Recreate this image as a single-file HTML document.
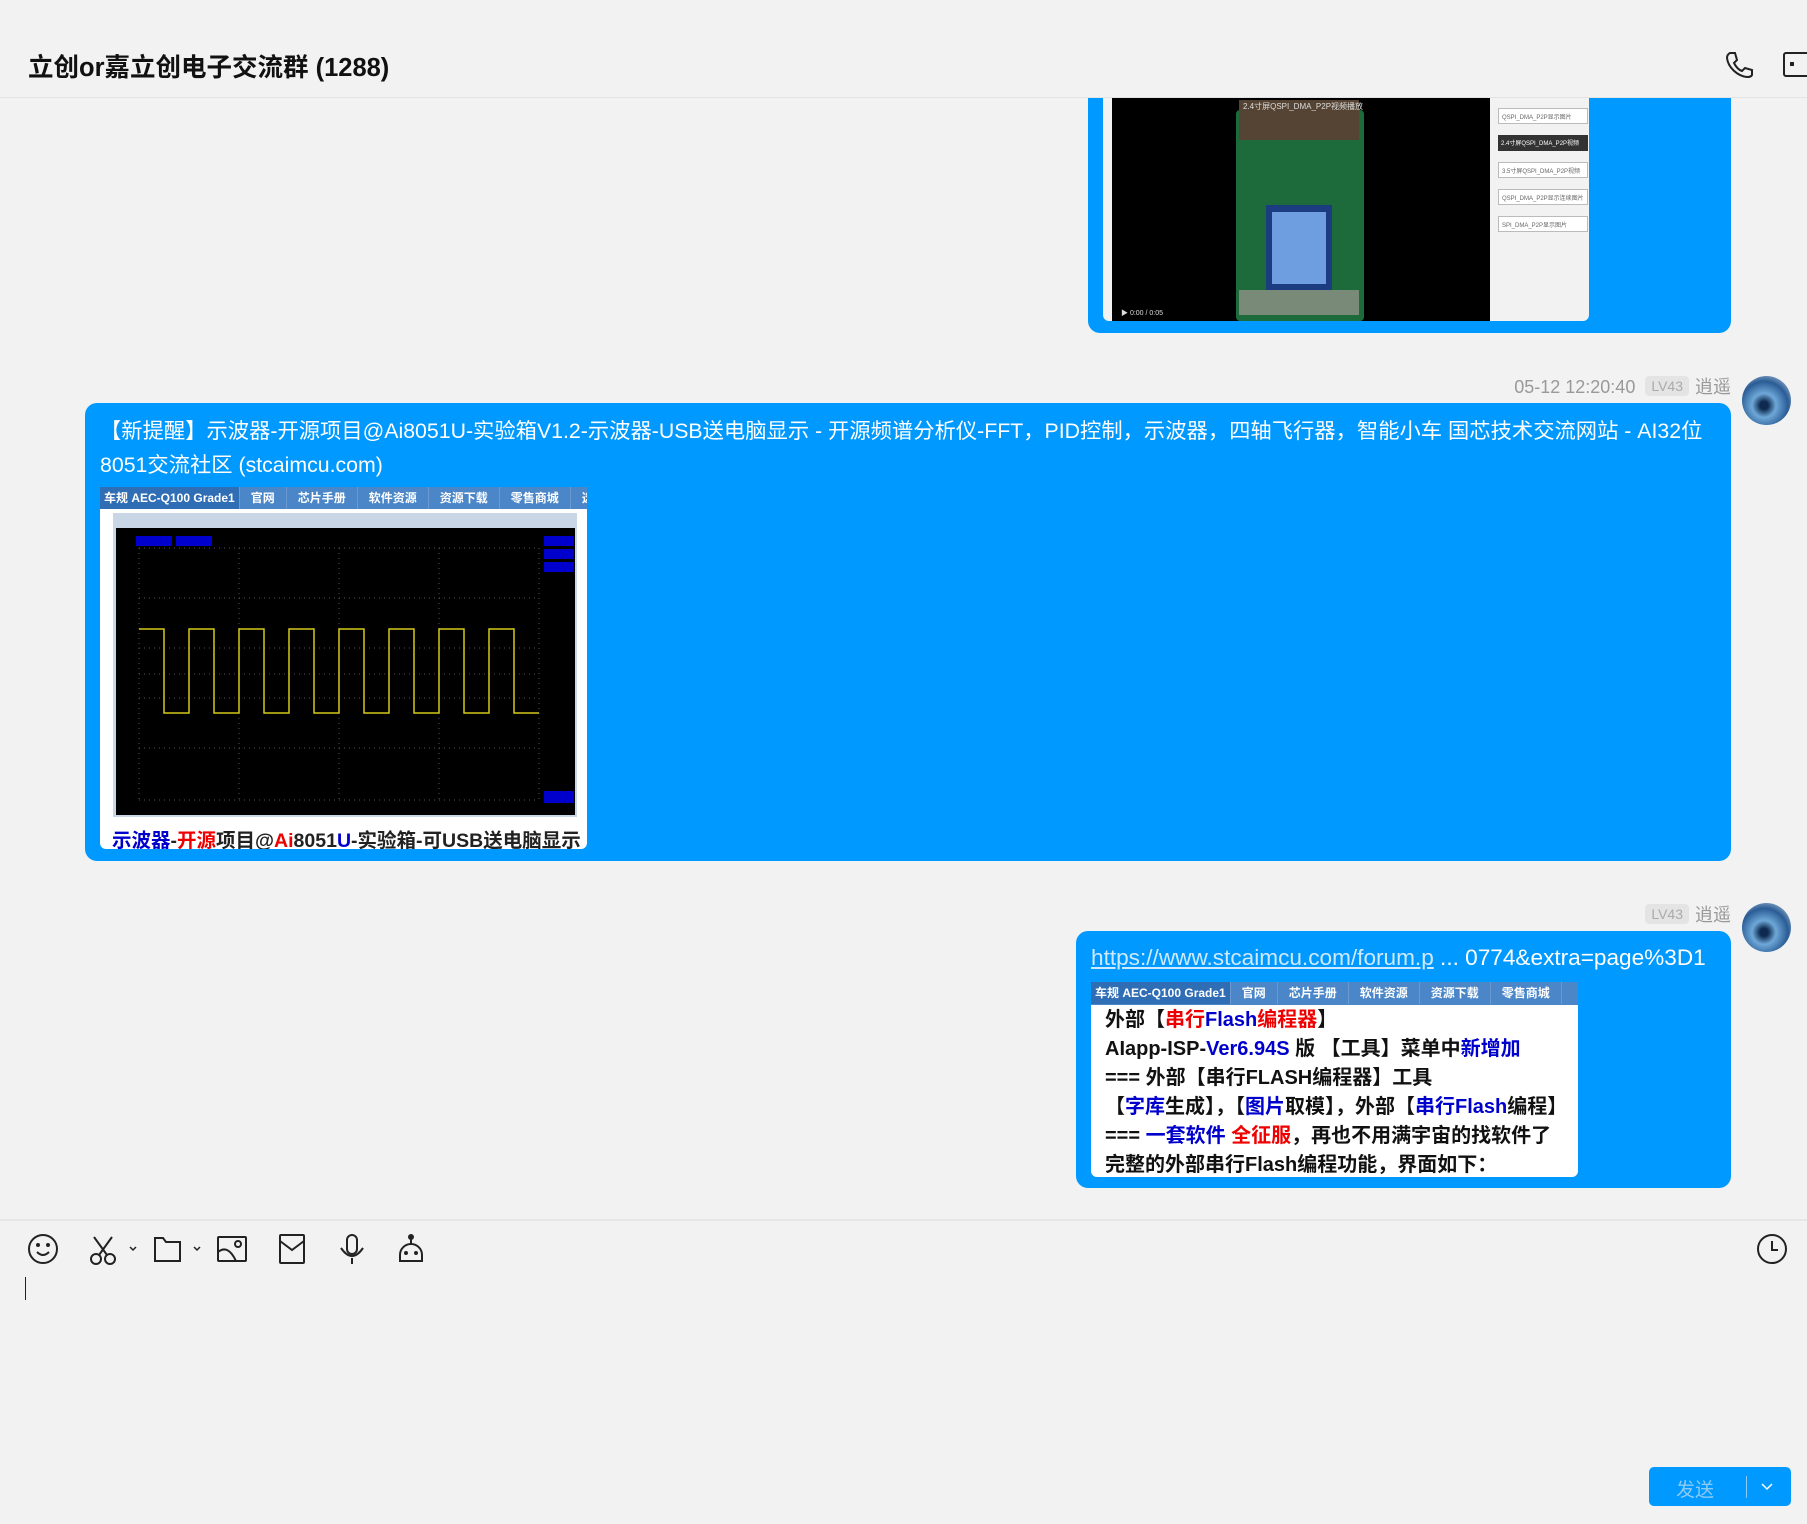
<!DOCTYPE html>
<html><head><meta charset="utf-8"><style>
*{margin:0;padding:0;box-sizing:border-box}
body{width:1807px;height:1524px;background:#f2f2f2;font-family:"Liberation Sans","Noto Sans CJK SC",sans-serif;position:relative;overflow:hidden}
.a{position:absolute}
.bub{position:absolute;background:#0099ff;border-radius:12px}
.nav{position:absolute;left:0;top:0;right:0;height:22px;background:#4a86c8;color:#fff;font-size:12px;font-weight:bold;white-space:nowrap;overflow:hidden}
.nav span{display:inline-block;padding:0 11px;line-height:22px;border-right:1px solid #6b9ad2}
.nav span:first-child{background:#2f6db5;padding:0 4px}
.meta{position:absolute;font-size:18px;color:#999;white-space:nowrap}
.lv{display:inline-block;background:#e4e4e4;color:#aaa;border-radius:4px;font-size:14px;padding:2px 6px;margin:0 6px 0 10px;vertical-align:2px}
.av{position:absolute;width:49px;height:49px;border-radius:50%;background:radial-gradient(circle at 45% 60%,#0e2a50 0 10%,#6ea8d8 30%,#2a5c95 60%,#dbe8f3 100%)}
.fl{font-weight:bold;font-size:20px;line-height:29px;color:#111;white-space:nowrap}
</style></head><body>

<div class="a" style="left:0;top:0;width:1807px;height:98px;background:#f2f2f2;border-bottom:1px solid #e3e3e3;z-index:5"></div>
<div class="a" style="left:28px;top:47px;font-size:25.5px;font-weight:bold;color:#111;z-index:6">立创or嘉立创电子交流群 (1288)</div>
<svg class="a" style="left:1724px;top:50px;z-index:6" width="30" height="30" viewBox="0 0 30 30"><path d="M6 3l5 0 2 7-3 3c2 4 5 7 8 8l3-3 7 2 0 5c-1 2-3 2-5 2C13 26 4 17 3 8c0-2 1-4 3-5z" fill="none" stroke="#222" stroke-width="2"/></svg>
<div class="a" style="left:1783px;top:52px;width:30px;height:25px;border:2px solid #222;border-radius:3px;z-index:6"></div>
<div class="a" style="left:1790px;top:62px;width:4px;height:4px;background:#222;z-index:6"></div>

<div class="bub" style="left:1088px;top:60px;width:643px;height:273px"></div>
<div class="a" style="left:1103px;top:60px;width:486px;height:261px;background:#f2f2f2;border-radius:6px;overflow:hidden">
 <div class="a" style="left:9px;top:0;width:378px;height:261px;background:#000"></div>
 <div class="a" style="left:133px;top:50px;width:128px;height:211px;background:#1d6b3b;border-radius:4px"></div>
 <div class="a" style="left:136px;top:40px;width:120px;height:40px;background:#554433"></div>
 <div class="a" style="left:163px;top:145px;width:66px;height:86px;background:#1b3c80"></div>
 <div class="a" style="left:169px;top:152px;width:54px;height:72px;background:#6f9ee0"></div>
 <div class="a" style="left:136px;top:230px;width:120px;height:25px;background:#7a8a78"></div>
 <div class="a" style="left:140px;top:41px;color:#ddd;font-size:8px">2.4寸屏QSPI_DMA_P2P视频播放</div>
 <div class="a" style="left:18px;top:248px;color:#ddd;font-size:7px">▶ 0:00 / 0:05</div>
 <div class="a" style="left:395px;top:48px;width:90px;height:16px;border:1px solid #bbb;background:#fff;font-size:6px;color:#666;padding:3px">QSPI_DMA_P2P显示图片</div>
 <div class="a" style="left:395px;top:75px;width:90px;height:16px;background:#333;font-size:6px;color:#fff;padding:3px">2.4寸屏QSPI_DMA_P2P视频</div>
 <div class="a" style="left:395px;top:102px;width:90px;height:16px;border:1px solid #bbb;background:#fff;font-size:6px;color:#666;padding:3px">3.5寸屏QSPI_DMA_P2P视频</div>
 <div class="a" style="left:395px;top:129px;width:90px;height:16px;border:1px solid #bbb;background:#fff;font-size:6px;color:#666;padding:3px">QSPI_DMA_P2P显示连续图片</div>
 <div class="a" style="left:395px;top:156px;width:90px;height:16px;border:1px solid #bbb;background:#fff;font-size:6px;color:#666;padding:3px">SPI_DMA_P2P显示图片</div>
</div>

<div class="meta" style="right:76px;top:373px">05-12 12:20:40<span class="lv">LV43</span>逍遥</div>
<div class="av" style="left:1742px;top:376px"></div>

<div class="bub" style="left:85px;top:403px;width:1646px;height:458px"></div>
<div class="a" style="left:100px;top:414px;width:1625px;font-size:21.3px;line-height:34px;color:#fff">【新提醒】示波器-开源项目@Ai8051U-实验箱V1.2-示波器-USB送电脑显示 - 开源频谱分析仪-FFT，PID控制，示波器，四轴飞行器，智能小车 国芯技术交流网站 - AI32位8051交流社区 (stcaimcu.com)</div>
<div class="a" style="left:100px;top:487px;width:487px;height:362px;background:#fff;border-radius:0 0 6px 6px;overflow:hidden">
 <div class="nav"><span>车规 AEC-Q100 Grade1</span><span>官网</span><span>芯片手册</span><span>软件资源</span><span>资源下载</span><span>零售商城</span><span>选型</span></div>
 <div class="a" style="left:13px;top:26px;width:464px;height:304px;background:#c9d6e6"></div>
 <div class="a" style="left:16px;top:41px;width:459px;height:287px;background:#000"></div>
 <svg class="a" style="left:16px;top:41px" width="459" height="287">
  <g stroke="#555" stroke-dasharray="1 4" stroke-width="1">
   <line x1="23" y1="20" x2="23" y2="272"/><line x1="423" y1="20" x2="423" y2="272"/>
   <line x1="123" y1="20" x2="123" y2="272"/><line x1="223" y1="20" x2="223" y2="272"/><line x1="323" y1="20" x2="323" y2="272"/>
   <line x1="23" y1="20" x2="423" y2="20"/><line x1="23" y1="70" x2="423" y2="70"/><line x1="23" y1="120" x2="423" y2="120"/><line x1="23" y1="146" x2="423" y2="146"/><line x1="23" y1="170" x2="423" y2="170"/><line x1="23" y1="220" x2="423" y2="220"/><line x1="23" y1="272" x2="423" y2="272"/>
  </g>
  <polyline fill="none" stroke="#d4c81a" stroke-width="1.5" points="23,101 48,101 48,185 73,185 73,101 98,101 98,185 123,185 123,101 148,101 148,185 173,185 173,101 198,101 198,185 223,185 223,101 248,101 248,185 273,185 273,101 298,101 298,185 323,185 323,101 348,101 348,185 373,185 373,101 398,101 398,185 423,185"/>
  <rect x="20" y="8" width="36" height="10" fill="#00c"/><rect x="60" y="8" width="36" height="10" fill="#00c"/>
  <rect x="428" y="8" width="30" height="10" fill="#00c"/><rect x="428" y="21" width="30" height="10" fill="#00c"/><rect x="428" y="34" width="30" height="10" fill="#00c"/>
  <rect x="428" y="263" width="30" height="12" fill="#00c"/>
 </svg>
 <div class="a" style="left:12px;top:337px;font-size:19.5px;font-weight:bold;color:#222;white-space:nowrap"><span style="color:#00c">示波器</span>-<span style="color:#e00">开源</span>项目@<span style="color:#e00">Ai</span>8051<span style="color:#00c">U</span>-实验箱-可USB送电脑显示</div>
</div>

<div class="meta" style="right:76px;top:901px"><span class="lv">LV43</span>逍遥</div>
<div class="av" style="left:1742px;top:903px"></div>

<div class="bub" style="left:1076px;top:931px;width:655px;height:257px"></div>
<div class="a" style="left:1091px;top:943px;font-size:22.6px;line-height:30px;color:#fff;white-space:nowrap"><span style="color:#cfe9ff;text-decoration:underline">https://www.stcaimcu.com/forum.p</span> ... 0774&amp;extra=page%3D1</div>
<div class="a" style="left:1091px;top:982px;width:487px;height:195px;background:#fff;border-radius:0 0 6px 6px;overflow:hidden">
 <div class="nav" style="height:23px"><span>车规 AEC-Q100 Grade1</span><span>官网</span><span>芯片手册</span><span>软件资源</span><span>资源下载</span><span>零售商城</span><span></span></div>
 <div class="a" style="left:14px;top:24px">
  <div class="fl">外部【<span style="color:#e00">串行</span><span style="color:#00c">Flash</span><span style="color:#e00">编程器</span>】</div>
  <div class="fl">AIapp-ISP-<span style="color:#00c">Ver6.94S</span> 版 【工具】菜单中<span style="color:#00c">新增加</span></div>
  <div class="fl">=== 外部【串行FLASH编程器】工具</div>
  <div class="fl">【<span style="color:#00c">字库</span>生成】，【<span style="color:#00c">图片</span>取模】，外部【<span style="color:#00c">串行Flash</span>编程】</div>
  <div class="fl">=== <span style="color:#00c">一套软件</span> <span style="color:#e00">全征服</span>，再也不用满宇宙的找软件了</div>
  <div class="fl">完整的外部串行Flash编程功能，界面如下：</div>
 </div>
</div>

<div class="a" style="left:0;top:1219px;width:1807px;height:2px;background:#e6e6e6"></div>
<svg class="a" style="left:26px;top:1232px" width="420" height="34" viewBox="0 0 420 34" fill="none" stroke="#222" stroke-width="2">
 <circle cx="17" cy="17" r="14"/><circle cx="12" cy="13" r="1" fill="#222"/><circle cx="22" cy="13" r="1" fill="#222"/><path d="M11 20q6 6 12 0"/>
 <circle cx="70" cy="27" r="5"/><circle cx="84" cy="27" r="5"/><path d="M73 23L86 5M81 23L68 5"/><path d="M104 15l3 3 3-3" stroke-width="1.5"/>
 <path d="M129 6h8l3 4h14v19h-25z"/><path d="M168 15l3 3 3-3" stroke-width="1.5"/>
 <rect x="192" y="5" width="28" height="24" rx="1"/><path d="M192 20q10-8 18 9"/><circle cx="212" cy="12" r="3"/>
 <rect x="254" y="3" width="24" height="28" rx="1"/><path d="M254 9l12 9 12-9"/>
 <rect x="321" y="3" width="10" height="19" rx="5"/><path d="M315 16q11 16 22 0M326 26v6"/>
 <path d="M385 12a11 11 0 0 1 11 11v6h-22v-6a11 11 0 0 1 11-11zM385 12v-6"/><circle cx="385" cy="5" r="2" fill="#222"/><circle cx="380" cy="21" r="1" fill="#222"/><circle cx="390" cy="21" r="1" fill="#222"/>
</svg>
<svg class="a" style="left:1756px;top:1233px" width="32" height="32" viewBox="0 0 32 32" fill="none" stroke="#222" stroke-width="2"><circle cx="16" cy="16" r="14"/><path d="M16 8v9h6"/></svg>
<div class="a" style="left:25px;top:1277px;width:1px;height:23px;background:#222"></div>
<div class="a" style="left:1649px;top:1467px;width:142px;height:39px;background:#0099ff;border-radius:5px"></div>
<div class="a" style="left:1676px;top:1475px;font-size:19px;color:#8ccbf5">发送</div>
<div class="a" style="left:1746px;top:1476px;width:1px;height:22px;background:#8ccbf5"></div>
<svg class="a" style="left:1760px;top:1481px" width="14" height="10"><path d="M2 3l5 5 5-5" fill="none" stroke="#fff" stroke-width="1.5"/></svg>
</body></html>
